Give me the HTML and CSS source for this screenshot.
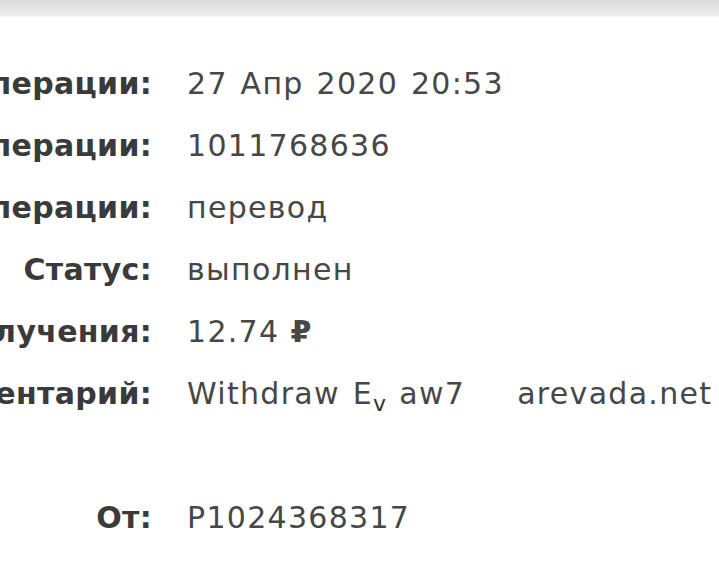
FILE: index.html
```html
<!DOCTYPE html>
<html lang="ru">
<head>
  <meta charset="UTF-8">
  <meta name="viewport" content="width=device-width, initial-scale=1.0">
  <title>Детали операции</title>
  <link rel="stylesheet" href="styles.css">
</head>
<body>
  <div class="topbar"></div>

  <div class="details">
    <div class="label">Дата операции:</div>
    <div class="value">27 Апр 2020 20:53</div>

    <div class="label">Номер операции:</div>
    <div class="value">1011768636</div>

    <div class="label">Тип операции:</div>
    <div class="value">перевод</div>

    <div class="label">Статус:</div>
    <div class="value">выполнен</div>

    <div class="label">Сумма получения:</div>
    <div class="value">12.74 <span class="rub">₽</span></div>

    <div class="label">Комментарий:</div>
    <div class="value">Withdraw E<span class="blur">v</span>aw7<span class="gap"></span>arevada.net</div>

    <div class="label"></div>
    <div class="value"></div>

    <div class="label">От:</div>
    <div class="value">P1024368317</div>
  </div>
</body>
</html>
```

FILE: styles.css
```css
html, body {
  margin: 0;
  padding: 0;
  background-color: #fff;
  overflow: hidden;
}
body {
  font-family: "DejaVu Sans", "Open Sans", sans-serif;
  color: #404040;
}
.topbar {
  height: 16px;
  background: linear-gradient(#dadada, #efefef);
  box-shadow: 0 1px 2px rgba(0, 0, 0, 0.06);
}
.details {
  display: grid;
  grid-template-columns: 152px 1fr;
  column-gap: 35px;
  grid-auto-rows: 62px;
  padding-top: 52px;
  font-size: 30px;
}
.label, .value {
  display: flex;
  align-items: flex-start;
  white-space: nowrap;
  line-height: 32px;
}
.label {
  justify-content: flex-end;
  font-weight: 700;
  color: #3a3a3a;
  letter-spacing: 0.3px;
}
.value {
  font-weight: 400;
  color: #474747;
  letter-spacing: 1.3px;
  word-spacing: 2px;
}
.rub {
  font-weight: 700;
  margin-left: 11px;
}
.blur {
  font-size: 22px;
  margin-top: 10px;
  margin-right: 12px;
  color: #333;
}
.gap {
  display: inline-block;
  width: 52px;
}
```
